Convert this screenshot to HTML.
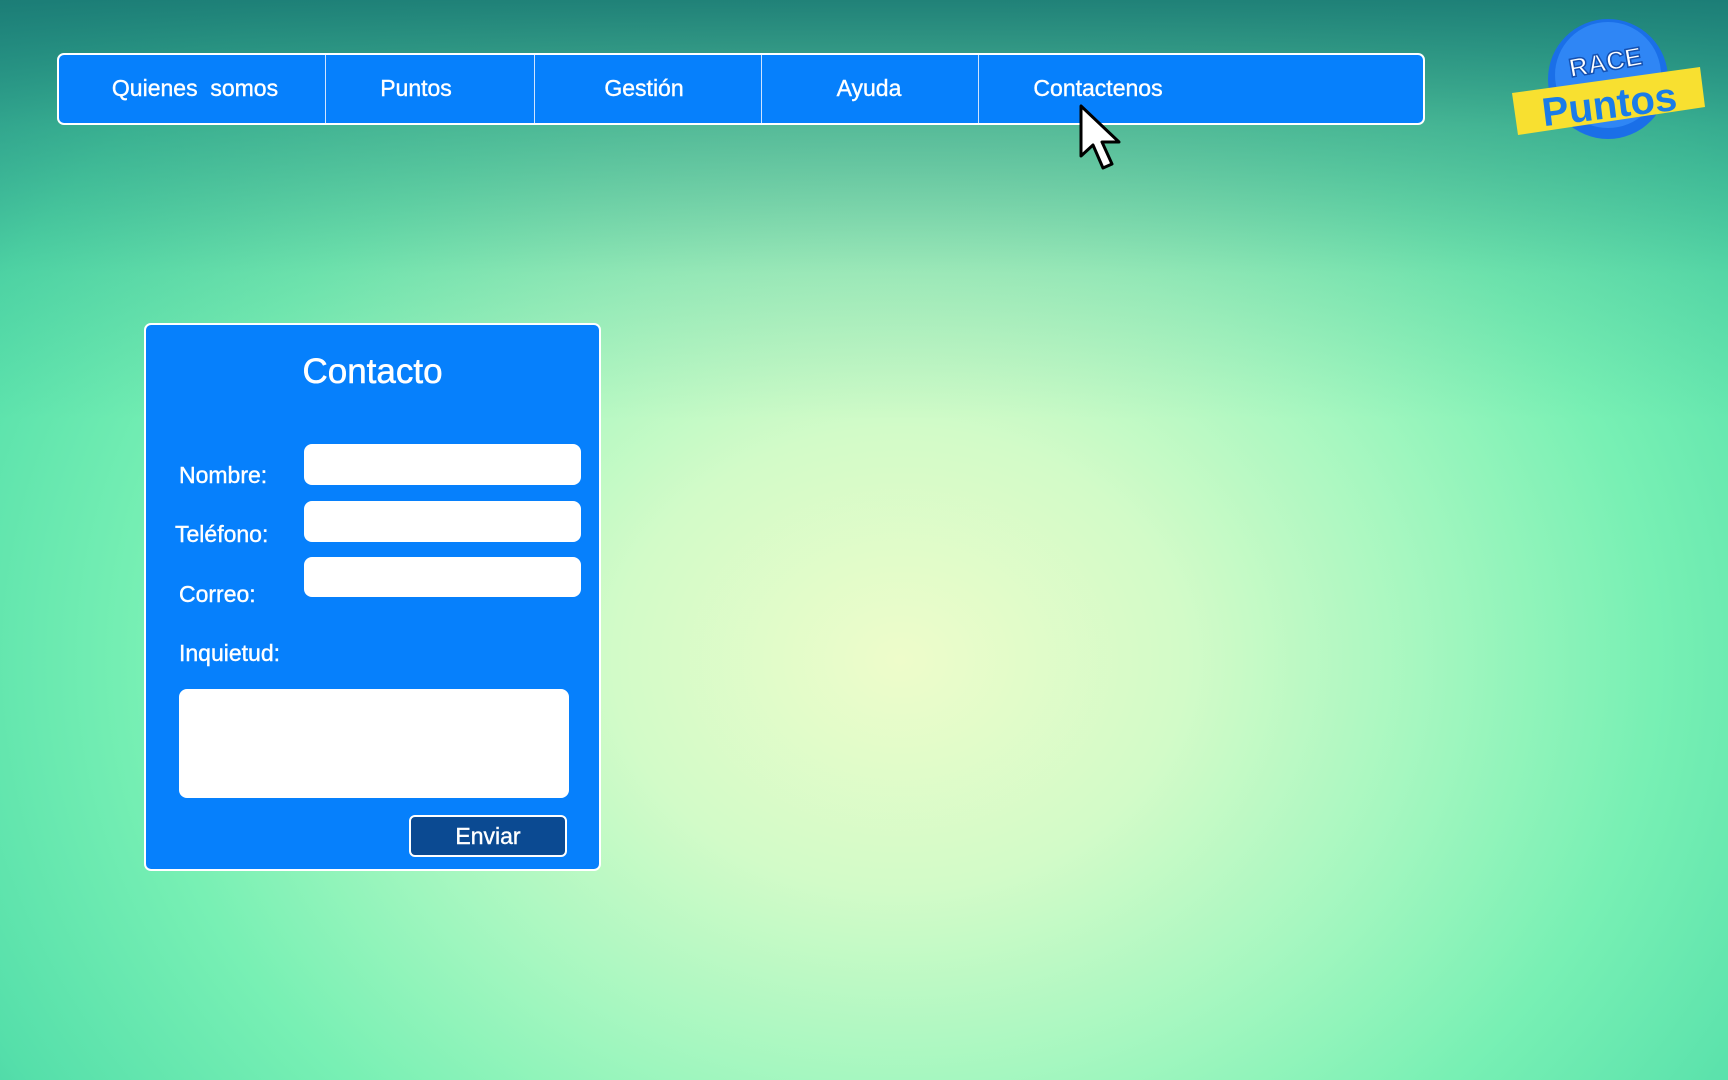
<!DOCTYPE html>
<html><head><meta charset="utf-8"><style>
*{margin:0;padding:0;box-sizing:border-box}
body{width:1728px;height:1080px;overflow:hidden;position:relative;font-family:"Liberation Sans",sans-serif;
background:radial-gradient(ellipse 1300px 1050px at 900px 660px,#eefcca 0%,#d2fbc8 22%,#a6f7c0 40%,#78f0b4 58%,#55dfaa 78%,#30b09c 100%);}
.top{position:absolute;left:0;top:0;width:1728px;height:420px;background:linear-gradient(180deg,rgba(24,118,114,.9) 0%,rgba(24,118,114,.45) 30%,rgba(24,118,114,.12) 65%,rgba(24,118,114,0) 100%);}
.nav{position:absolute;left:57px;top:53px;width:1368px;height:72px;background:#0680fc;border:2px solid #fff;border-radius:7px;color:#fff;font-size:23px}
.nav span{position:absolute;top:20px;transform:translateX(-50%);white-space:nowrap;-webkit-text-stroke:.4px #fff}
.nav i{position:absolute;top:0;width:1px;height:68px;background:#cfe4ff}
.form{position:absolute;left:144px;top:323px;width:457px;height:548px;background:#0680fc;border:2px solid #fff;border-radius:7px;color:#fff}
.form .t{position:absolute;left:0;width:100%;text-align:center;top:27px;font-size:35px;-webkit-text-stroke:.5px #fff}
.lb{position:absolute;font-size:23px;-webkit-text-stroke:.4px #fff}
.in{position:absolute;background:#fff;border-radius:8px}
.btn{position:absolute;left:263px;top:490px;width:158px;height:42px;background:#0b4a92;border:2px solid #fff;border-radius:6px;text-align:center;font-size:23px;line-height:38px;-webkit-text-stroke:.4px #fff}
</style></head><body>
<div class="top"></div>
<div class="nav">
<span style="left:136px">Quienes&nbsp; somos</span><i style="left:266px"></i>
<span style="left:357px">Puntos</span><i style="left:475px"></i>
<span style="left:585px">Gestión</span><i style="left:702px"></i>
<span style="left:810px">Ayuda</span><i style="left:919px"></i>
<span style="left:1039px">Contactenos</span>
</div>
<svg style="position:absolute;left:1500px;top:15px" width="215" height="130" viewBox="0 0 215 130">
<circle cx="108" cy="64" r="60" fill="#1a6fe8"/>
<circle cx="108" cy="60" r="53" fill="#2f86f5"/>
<text x="106" y="56" text-anchor="middle" font-family="Liberation Sans" font-weight="bold" font-size="26" fill="#fff" stroke="#1450b0" stroke-width="1.5" transform="rotate(-10 106 50)">RACE</text>
<polygon points="12,78 200,52 205,92 18,120" fill="#f8e030"/>
<text x="110" y="103" text-anchor="middle" font-family="Liberation Sans" font-weight="bold" font-size="40" fill="#1a7ce8" transform="rotate(-7 110 95)">Puntos</text>
</svg>
<svg style="position:absolute;left:1078px;top:104px" width="50" height="72" viewBox="0 0 50 72">
<path d="M3 2 L3 52 L15 41 L25 64 L34 60 L24 38 L41 38 Z" fill="#fff" stroke="#000" stroke-width="3" stroke-linejoin="round"/>
</svg>
<div class="form">
<div class="t">Contacto</div>
<div class="lb" style="left:33px;top:137px">Nombre:</div>
<div class="lb" style="left:29px;top:196px">Teléfono:</div>
<div class="lb" style="left:33px;top:256px">Correo:</div>
<div class="lb" style="left:33px;top:315px">Inquietud:</div>
<div class="in" style="left:158px;top:119px;width:277px;height:41px"></div>
<div class="in" style="left:158px;top:176px;width:277px;height:41px"></div>
<div class="in" style="left:158px;top:232px;width:277px;height:40px"></div>
<div class="in" style="left:33px;top:364px;width:390px;height:109px"></div>
<div class="btn">Enviar</div>
</div>
</body></html>
